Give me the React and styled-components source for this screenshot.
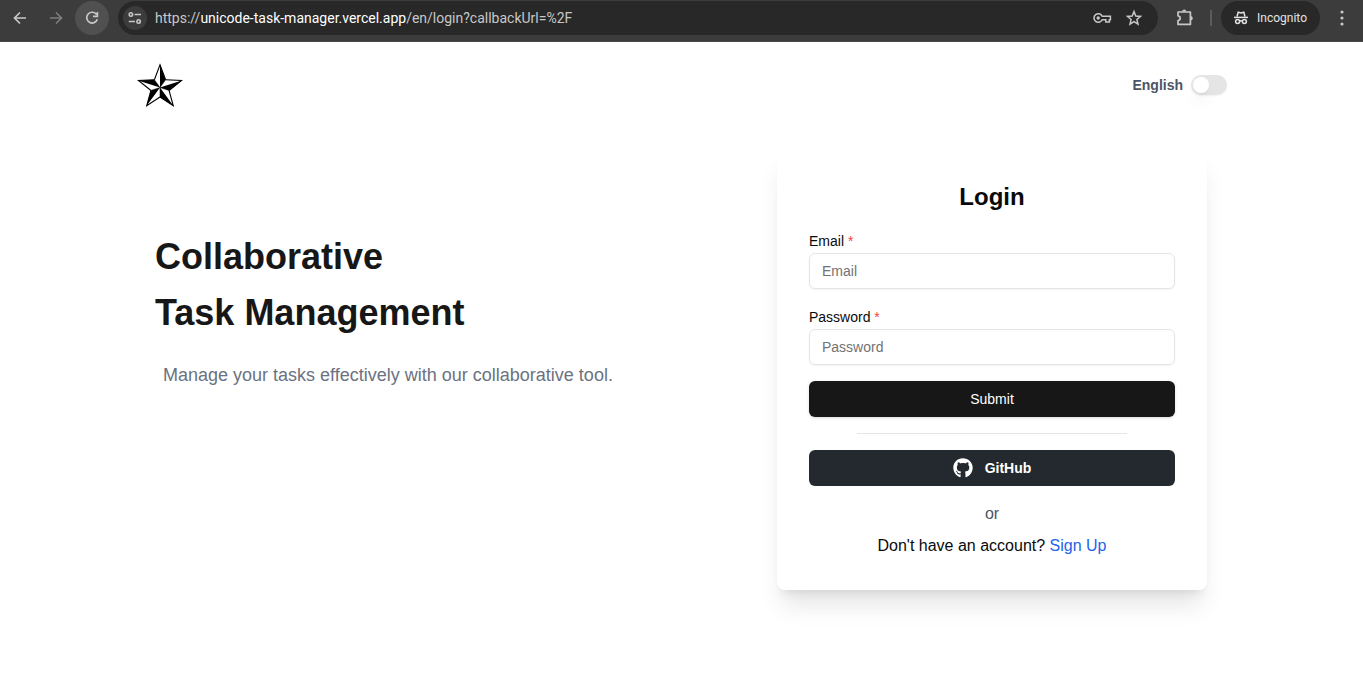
import React from "react";
import styled, { createGlobalStyle } from "styled-components";
import { FaGithub } from "react-icons/fa";

const GlobalStyle = createGlobalStyle`
  *, *::before, *::after { box-sizing: border-box; }
  body {
    margin: 0;
    background: #fff;
    color: #0a0a0a;
    font-family: "Liberation Sans", Arial, sans-serif;
    font-size: 16px;
    line-height: 24px;
  }
  button, input { font: inherit; }
  h1, h2, p { margin: 0; }
`;

const BrowserBar = styled.div`
  display: flex;
  align-items: center;
  height: 42px;
  padding: 1px 4px 6px 3px;
  background: #3c3c3c;
  border-bottom: 1px solid #4a4a4a;
  color: #c7c7c7;
  font-family: Roboto, "Open Sans", sans-serif;
`;

const BarButton = styled.button`
  display: grid;
  place-items: center;
  flex: none;
  width: ${(p) => p.$size || 34}px;
  height: ${(p) => p.$size || 34}px;
  padding: 0;
  border: 0;
  border-radius: 50%;
  background: ${(p) => p.$bg || "transparent"};
  color: ${(p) => (p.$dim ? "#7d7d7d" : "#c7c7c7")};
`;

const NavGroup = styled.div`
  display: flex;
  gap: 2px;
`;

const AddressBar = styled.div`
  display: flex;
  align-items: center;
  flex: 1;
  min-width: 0;
  height: 34px;
  margin: 0 10px 0 9px;
  padding: 0 8px 0 5px;
  border-radius: 17px;
  background: #282828;
`;

const Url = styled.span`
  flex: 1;
  min-width: 0;
  overflow: hidden;
  margin-left: 8px;
  font-size: 14px;
  line-height: 20px;
  white-space: nowrap;
`;

const Host = styled.span`
  color: #fff;
`;

const BarDivider = styled.span`
  width: 2px;
  height: 16px;
  margin: 0 9px 0 8px;
  background: #5c5c5c;
`;

const IncognitoChip = styled.button`
  display: flex;
  align-items: center;
  gap: 8px;
  height: 34px;
  padding: 0 13px 0 12px;
  margin-right: 5px;
  border: 0;
  border-radius: 17px;
  background: #282828;
  color: #e3e3e3;
  font-size: 12px;
`;

const Page = styled.div`
  padding: 0 136px;
`;

const Header = styled.header`
  display: flex;
  align-items: center;
  justify-content: space-between;
  height: 86px;
`;

const LogoLink = styled.a`
  display: block;
  height: 48px;
`;

const LanguageLabel = styled.label`
  display: flex;
  align-items: center;
  gap: 8px;
  color: #4b5563;
  font-size: 14px;
  font-weight: 600;
`;

const Switch = styled.input`
  appearance: none;
  width: 36px;
  height: 20px;
  margin: 0;
  padding: 2px;
  border-radius: 10px;
  background: #e5e5e5;
  box-shadow: 0 1px 2px rgba(0, 0, 0, 0.05);

  &::before {
    content: "";
    display: block;
    width: 16px;
    height: 16px;
    border-radius: 50%;
    background: #fff;
    box-shadow: 0 10px 15px -3px rgba(0, 0, 0, 0.1), 0 4px 6px -4px rgba(0, 0, 0, 0.1);
  }

  &:checked::before {
    margin-left: 16px;
  }
`;

const Main = styled.main`
  display: flex;
  align-items: flex-start;
  justify-content: space-between;
  gap: 32px;
  padding: 21px 20px 80px 19px;
`;

const Hero = styled.section`
  padding-top: 80px;
`;

const HeroTitle = styled.h1`
  color: #171717;
  font-size: 36px;
  font-weight: 700;
  line-height: 56px;
`;

const TitleLine = styled.span`
  display: block;
`;

const HeroText = styled.p`
  margin-top: 20px;
  padding-left: 8px;
  color: #6b7280;
  font-size: 18px;
  line-height: 28px;
`;

const Card = styled.section`
  display: flex;
  flex-direction: column;
  gap: 16px;
  flex: 0 1 430px;
  padding: 32px;
  border-radius: 8px;
  background: #fff;
  box-shadow: 0 20px 25px -5px rgba(0, 0, 0, 0.1), 0 8px 10px -6px rgba(0, 0, 0, 0.1);
`;

const CardTitle = styled.h2`
  font-size: 24px;
  line-height: 32px;
  text-align: center;
`;

const Form = styled.form`
  display: flex;
  flex-direction: column;
  gap: 16px;
`;

const FieldLabel = styled.label`
  display: block;
  font-size: 14px;
`;

const Required = styled.span`
  color: #ef4444;
`;

const TextInput = styled.input`
  display: block;
  width: 100%;
  height: 36px;
  padding: 4px 12px;
  border: 1px solid #e5e5e5;
  border-radius: 6px;
  background: transparent;
  box-shadow: 0 1px 2px rgba(0, 0, 0, 0.05);
  font-size: 14px;

  &::placeholder {
    color: #737373;
  }
`;

const ActionButton = styled.button`
  display: flex;
  align-items: center;
  justify-content: center;
  gap: 12px;
  width: 100%;
  height: 36px;
  border: 0;
  border-radius: 6px;
  background: ${(p) => (p.$github ? "#24292f" : "#171717")};
  box-shadow: ${(p) => (p.$github ? "none" : "0 1px 3px rgba(0, 0, 0, 0.15)")};
  color: #fff;
  font-size: 14px;
  font-weight: ${(p) => (p.$github ? 700 : 400)};
`;

const Divider = styled.hr`
  align-self: stretch;
  height: 1px;
  margin: 0 48px;
  border: 0;
  background: #e5e5e5;
`;

const CardFooter = styled.div`
  display: flex;
  flex-direction: column;
  gap: 8px;
  text-align: center;
`;

const OrText = styled.p`
  color: #4b5563;
`;

const SignUpLink = styled.a`
  color: #2563eb;
  text-decoration: none;
`;

function StrokeIcon({ w = 20, h = 20, width = 1.7, children }) {
  return (
    <svg width={w} height={h} viewBox={`0 0 ${w} ${h}`} fill="none" stroke="currentColor" strokeWidth={width} aria-hidden="true">
      {children}
    </svg>
  );
}

const ROTATIONS = [0, 72, 144, 216, 288];

function StarLogo() {
  return (
    <svg width="48" height="48" viewBox="0 0 48 48" role="img" aria-label="Home">
      <g transform="translate(24 26.5)">
        {ROTATIONS.map((angle) => (
          <g key={angle} transform={`rotate(${angle})`}>
            <path d="M0 0L0 -23L5.6 -7.7Z" fill="#000" />
            <path d="M5.6 -7.7L0 -22.6L-5.6 -7.7" fill="none" stroke="#000" strokeWidth="1.1" />
            <path d="M0 0L-5.6 -7.7" stroke="#000" strokeWidth="0.5" />
          </g>
        ))}
      </g>
    </svg>
  );
}

function Browser() {
  return (
    <BrowserBar>
      <NavGroup>
        <BarButton aria-label="Back">
          <StrokeIcon><path d="M16 10H5M10 4.5L4.5 10L10 15.5" /></StrokeIcon>
        </BarButton>
        <BarButton aria-label="Forward" $dim>
          <StrokeIcon><path d="M4 10H15M10 4.5L15.5 10L10 15.5" /></StrokeIcon>
        </BarButton>
        <BarButton aria-label="Reload" $bg="#505050">
          <StrokeIcon><path d="M14.6 6.6A5.4 5.4 0 1 0 15.3 11.2M15.4 4V8.4H11" /></StrokeIcon>
        </BarButton>
      </NavGroup>
      <AddressBar>
        <BarButton aria-label="View site information" $size={24} $bg="#3c3c3c">
          <StrokeIcon w={16} h={16} width={1.6}>
            <circle cx="3.9" cy="4.5" r="1.7" />
            <circle cx="11.6" cy="11.5" r="1.7" />
            <path d="M7.6 4.5H14M1.8 11.5H8" />
          </StrokeIcon>
        </BarButton>
        <Url>https://<Host>unicode-task-manager.vercel.app</Host>/en/login?callbackUrl=%2F</Url>
        <BarButton aria-label="Passwords" $size={32}>
          <StrokeIcon width={1.5}>
            <path d="M10.2 8.2A4.3 4.3 0 1 0 10.2 11.8H13.8V14H17.4V11.8H18.4V8.2Z" />
            <circle cx="6.2" cy="10" r="1.7" fill="currentColor" stroke="none" />
          </StrokeIcon>
        </BarButton>
        <BarButton aria-label="Bookmark this page" $size={32}>
          <StrokeIcon width={1.5}>
            <path d="M10 3.6L11.8 8L16.5 8.4L12.9 11.5L14 16.1L10 13.6L6 16.1L7.1 11.5L3.5 8.4L8.2 8Z" />
          </StrokeIcon>
        </BarButton>
      </AddressBar>
      <BarButton aria-label="Extensions">
        <StrokeIcon width={1.7}>
          <path d="M3 4H15.4V16.4H3V12.6Q5.2 12.2 5.2 10.2T3 7.8Z" strokeLinejoin="round" />
          <path d="M7 3.6Q7.4 1.6 9.2 1.6T11.4 3.6ZM15.8 8Q17.8 8.4 17.8 10.2T15.8 12.4Z" fill="currentColor" stroke="none" />
        </StrokeIcon>
      </BarButton>
      <BarDivider />
      <IncognitoChip>
        <StrokeIcon w={16} h={16} width={1.5}>
          <path d="M4 6.6L5.2 2.2L8 2.9L10.8 2.2L12 6.6" />
          <path d="M1 7.4H15" />
          <circle cx="4.6" cy="11.6" r="2" />
          <circle cx="11.4" cy="11.6" r="2" />
          <path d="M6.6 11.2Q8 10.4 9.4 11.2" />
        </StrokeIcon>
        Incognito
      </IncognitoChip>
      <BarButton aria-label="Menu">
        <svg width="4" height="16" viewBox="0 0 4 16" fill="currentColor" aria-hidden="true">
          <circle cx="2" cy="2" r="1.6" />
          <circle cx="2" cy="8" r="1.6" />
          <circle cx="2" cy="14" r="1.6" />
        </svg>
      </BarButton>
    </BrowserBar>
  );
}

function Field({ id, label, type }) {
  return (
    <div>
      <FieldLabel htmlFor={id}>
        {label} <Required>*</Required>
      </FieldLabel>
      <TextInput id={id} type={type} placeholder={label} />
    </div>
  );
}

export default function App() {
  return (
    <>
      <GlobalStyle />
      <Browser />
      <Page>
        <Header>
          <LogoLink href="#"><StarLogo /></LogoLink>
          <LanguageLabel>
            English
            <Switch type="checkbox" role="switch" />
          </LanguageLabel>
        </Header>
        <Main>
          <Hero>
            <HeroTitle>
              <TitleLine>Collaborative</TitleLine>
              <TitleLine>Task Management</TitleLine>
            </HeroTitle>
            <HeroText>Manage your tasks effectively with our collaborative tool.</HeroText>
          </Hero>
          <Card>
            <CardTitle>Login</CardTitle>
            <Form onSubmit={(e) => e.preventDefault()}>
              <Field id="email" label="Email" type="email" />
              <Field id="password" label="Password" type="password" />
              <ActionButton type="submit">Submit</ActionButton>
            </Form>
            <Divider />
            <ActionButton type="button" $github>
              <FaGithub size={20} aria-hidden="true" />
              GitHub
            </ActionButton>
            <CardFooter>
              <OrText>or</OrText>
              <p>
                Don't have an account? <SignUpLink href="#">Sign Up</SignUpLink>
              </p>
            </CardFooter>
          </Card>
        </Main>
      </Page>
    </>
  );
}
